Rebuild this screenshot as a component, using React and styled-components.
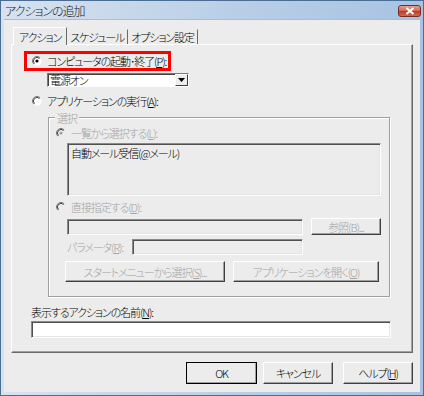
import React from 'react';
import styled, { createGlobalStyle, css } from 'styled-components';

const Global = createGlobalStyle`
  html, body { margin: 0; padding: 0; background: #fff; }
  * { box-sizing: border-box; }
  body {
    font-family: "Noto Sans CJK JP", "Noto Sans", sans-serif;
    font-size: 11px;
    font-weight: 300;
    font-feature-settings: "palt" 1;
    letter-spacing: -1.1px;
    color: #000;
  }
`;

const Window = styled.div`
  width: 424px;
  height: 396px;
  border: 1px solid #4c6d92;
  background: linear-gradient(90deg, #d6e2ef 0%, #b7cde6 60%, #a7c3e3 100%);
  display: flex;
  flex-direction: column;
`;

const TitleBar = styled.div`
  height: 18px;
  display: flex;
  align-items: center;
  justify-content: space-between;
  padding: 0 2px 0 4px;
`;

const Title = styled.span`
  font-size: 12px;
  letter-spacing: -1px;
  color: #1a1a1a;
`;

const CloseBtn = styled.div`
  width: 23px;
  height: 12px;
  margin-top: 1px;
  border: 1px solid #7a2a22;
  border-radius: 3px;
  background: linear-gradient(180deg, #e8a08e 0%, #d46a55 45%, #b83e2c 55%, #cf6a50 100%);
  display: flex;
  align-items: center;
  justify-content: center;
`;

const Client = styled.div`
  flex: 1;
  margin: 0 3px 3px;
  background: #ececec;
  border-top: 1px solid #a9bdd4;
  padding: 7px 7px 0 7px;
  display: flex;
  flex-direction: column;
`;

const TabRow = styled.div`
  display: flex;
  align-items: flex-end;
  height: 17px;
  padding-left: 2px;
  position: relative;
  z-index: 1;
`;

const Tab = styled.div`
  height: ${p => (p.$active ? '18px' : '15px')};
  padding: 0 ${p => (p.$active ? '5px' : '3px')};
  margin-bottom: ${p => (p.$active ? '-1px' : '0')};
  display: flex;
  align-items: center;
  border-top: 1px solid #fff;
  border-left: 1px solid #fff;
  border-right: 1px solid #6a6a6a;
  background: #ececec;
  ${p => !p.$active && css`
    border-top-color: transparent;
    border-left: none;
  `}
`;

const Panel = styled.div`
  height: 309px;
  border-top: 1px solid #fff;
  border-left: 1px solid #fff;
  border-right: 1px solid #6a6a6a;
  border-bottom: 1px solid #6a6a6a;
  box-shadow: inset -1px -1px 0 #a0a0a0;
  padding: 6px 0 0 12px;
  display: flex;
  flex-direction: column;
  align-items: flex-start;
`;

const Highlight = styled.div`
  width: 147px;
  height: 20px;
  border: 3px solid #ff0000;
  padding-left: 5px;
  display: flex;
  align-items: center;
`;

const OptionRow = styled.div`
  display: flex;
  align-items: center;
  height: 13px;
  gap: 5px;
  margin-left: ${p => p.$indent || 0}px;
  margin-top: ${p => p.$top || 0}px;
  color: ${p => (p.$disabled ? '#a3a3a3' : '#000')};
  white-space: nowrap;
`;

const Combo = styled.div`
  width: 142px;
  height: 14px;
  margin: 2px 0 0 23px;
  background: #fff;
  border-top: 1px solid #7a7a7a;
  border-left: 1px solid #7a7a7a;
  border-right: 1px solid #fff;
  border-bottom: 1px solid #fff;
  box-shadow: inset 1px 1px 0 #404040;
  display: flex;
  align-items: center;
  justify-content: space-between;
  padding-left: 2px;
`;

const ComboArrow = styled.div`
  width: 13px;
  height: 12px;
  background: #ececec;
  border-top: 1px solid #fff;
  border-left: 1px solid #fff;
  border-right: 1px solid #404040;
  border-bottom: 1px solid #404040;
  display: flex;
  align-items: center;
  justify-content: center;
`;

const Group = styled.div`
  position: relative;
  width: 342px;
  height: 180px;
  margin: 10px 0 0 24px;
  border: 1px solid #a0a0a0;
  box-shadow: inset 1px 1px 0 #fff, 1px 1px 0 #fff;
  padding: 8px 0 0 7px;
  display: flex;
  flex-direction: column;
  align-items: flex-start;
`;

const Legend = styled.span`
  position: absolute;
  top: -8px;
  left: 6px;
  padding: 0 2px;
  background: #ececec;
  color: #a3a3a3;
`;

const sunken = css`
  border-top: 1px solid #8a8a8a;
  border-left: 1px solid #8a8a8a;
  border-right: 1px solid #fff;
  border-bottom: 1px solid #fff;
  box-shadow: inset 1px 1px 0 #505050, inset -1px -1px 0 #e4e4e4;
`;

const ListBox = styled.div`
  ${sunken};
  width: 314px;
  height: 53px;
  margin: 4px 0 0 11px;
  padding: 1px 3px;
  background: #ececec;
`;

const TextBox = styled.div`
  ${sunken};
  width: ${p => p.$w}px;
  height: ${p => p.$h || 15}px;
  background: ${p => (p.$white ? '#fff' : '#ececec')};
`;

const FieldRow = styled.div`
  display: flex;
  align-items: center;
  gap: 8px;
  margin: ${p => p.$top || 0}px 0 0 ${p => p.$indent || 0}px;
  color: #a3a3a3;
  white-space: nowrap;
`;

const FieldLabel = styled.span`
  width: 57px;
`;

const Button = styled.div`
  width: ${p => p.$w}px;
  height: ${p => p.$h || 22}px;
  background: #ececec;
  border-top: 1px solid #fff;
  border-left: 1px solid #fff;
  border-right: 1px solid #404040;
  border-bottom: 1px solid #404040;
  box-shadow: inset -1px -1px 0 #a0a0a0;
  display: flex;
  align-items: center;
  justify-content: center;
  color: ${p => (p.$disabled ? '#a3a3a3' : '#000')};
  white-space: nowrap;
  ${p => p.$default && css`
    outline: 1px solid #000;
    outline-offset: -1px;
  `}
`;

const NameLabel = styled.div`
  margin: 9px 0 0 7px;
  height: 13px;
  line-height: 13px;
  white-space: nowrap;
`;

const NameBox = styled(TextBox)`
  margin: 2px 0 0 7px;
`;

const Footer = styled.div`
  display: flex;
  justify-content: flex-end;
  margin-top: 9px;
  gap: 6px;
  & > :last-child { margin-left: 4px; }
`;

const Radio = ({ checked, disabled }) => (
  <svg width="10" height="10" viewBox="0 0 10 10">
    <circle cx="5" cy="5" r="4.5" fill={disabled ? '#ececec' : '#fff'} />
    <path d="M8.2 1.8 A4.5 4.5 0 0 0 1.8 8.2" stroke="#7a7a7a" strokeWidth="1" fill="none" />
    <path d="M7.5 2.5 A3.5 3.5 0 0 0 2.5 7.5" stroke="#404040" strokeWidth="1" fill="none" />
    {checked && <circle cx="5" cy="5" r="1.6" fill={disabled ? '#a0a0a0' : '#000'} />}
  </svg>
);

export default function App() {
  return (
    <>
      <Global />
      <Window>
        <TitleBar>
          <Title>アクションの追加</Title>
          <CloseBtn>
            <svg width="10" height="8" viewBox="0 0 10 8">
              <path d="M1.5 1 L8.5 7 M8.5 1 L1.5 7" stroke="#fff" strokeWidth="2" />
            </svg>
          </CloseBtn>
        </TitleBar>
        <Client>
          <TabRow>
            <Tab $active>アクション</Tab>
            <Tab>スケジュール</Tab>
            <Tab>オプション設定</Tab>
          </TabRow>
          <Panel>
            <Highlight>
              <OptionRow>
                <Radio checked />
                <span>コンピュータの起動･終了(<u>P</u>):</span>
              </OptionRow>
            </Highlight>
            <Combo>
              <span>電源オン</span>
              <ComboArrow>
                <svg width="7" height="4" viewBox="0 0 7 4"><path d="M0 0 H7 L3.5 4 Z" fill="#000" /></svg>
              </ComboArrow>
            </Combo>
            <OptionRow $indent={8} $top={7}>
              <Radio />
              <span>アプリケーションの実行(<u>A</u>):</span>
            </OptionRow>
            <Group>
              <Legend>選択</Legend>
              <OptionRow $disabled>
                <Radio checked disabled />
                <span>一覧から選択する(<u>L</u>):</span>
              </OptionRow>
              <ListBox>自動メール受信(@メール)</ListBox>
              <OptionRow $disabled $top={4}>
                <Radio disabled />
                <span>直接指定する(<u>D</u>):</span>
              </OptionRow>
              <FieldRow $indent={11} $top={5}>
                <TextBox $w={236} $h={16} />
                <Button $w={70} $h={17} $disabled>参照(<u>B</u>)...</Button>
              </FieldRow>
              <FieldRow $indent={11} $top={4}>
                <FieldLabel>パラメータ(<u>R</u>):</FieldLabel>
                <TextBox $w={171} $h={16} />
              </FieldRow>
              <FieldRow $indent={9} $top={6}>
                <Button $w={160} $h={21} $disabled>スタートメニューから選択(<u>S</u>)...</Button>
                <Button $w={146} $h={21} $disabled>アプリケーションを開く(<u>O</u>)</Button>
              </FieldRow>
            </Group>
            <NameLabel>表示するアクションの名前(<u>N</u>):</NameLabel>
            <NameBox $w={360} $h={17} $white />
          </Panel>
          <Footer>
            <Button $w={71} $default>OK</Button>
            <Button $w={70}>キャンセル</Button>
            <Button $w={70}>ヘルプ(<u>H</u>)</Button>
          </Footer>
        </Client>
      </Window>
    </>
  );
}
